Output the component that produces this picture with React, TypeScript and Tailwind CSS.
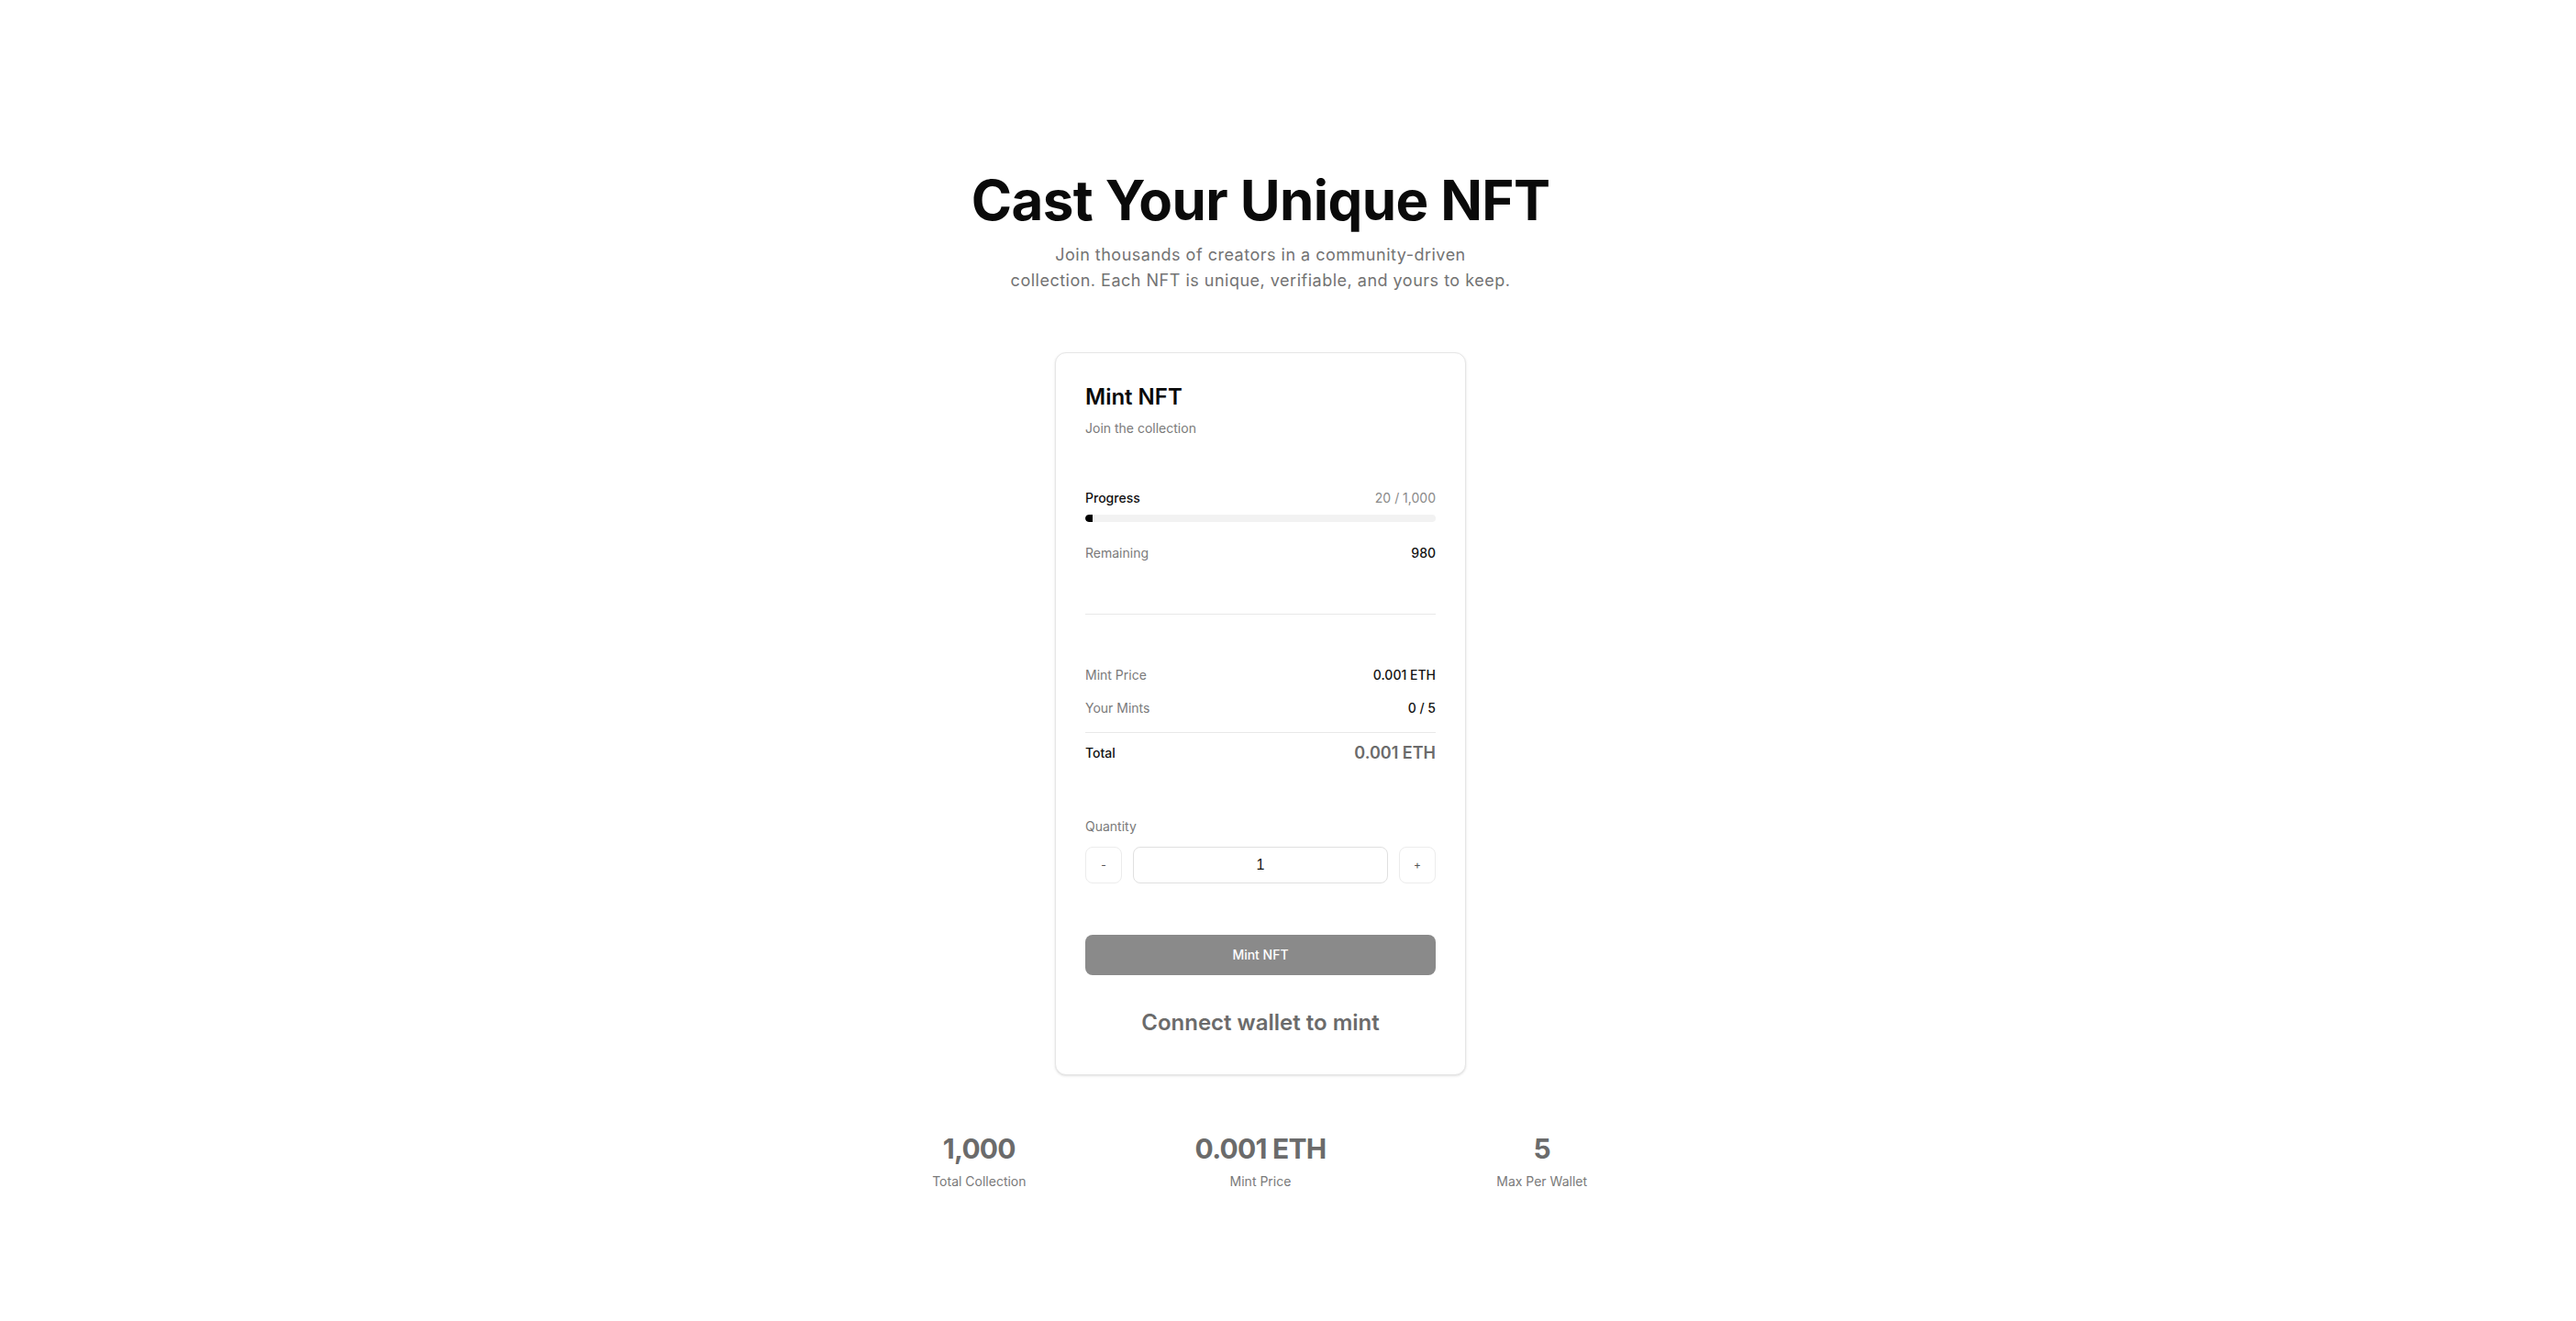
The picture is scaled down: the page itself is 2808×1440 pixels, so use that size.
import React from "react";

function Row({ label, value }: { label: string; value: string }) {
  return (
    <div className="flex items-center justify-between text-sm leading-5">
      <span className="text-[#7a7a7a]">{label}</span>
      <span className="font-medium text-[#111111]">{value}</span>
    </div>
  );
}

function Stat({ value, label }: { value: string; label: string }) {
  return (
    <div className="flex flex-col items-center">
      <div className="text-3xl font-bold leading-9 tracking-tight text-[#6b6b6b]">{value}</div>
      <div className="mt-2 text-sm leading-5 text-[#7a7a7a]">{label}</div>
    </div>
  );
}

export default function App() {
  const minted = 20;
  const total = 1000;
  const pct = (minted / total) * 100;
  return (
    <div
      className="min-h-screen w-full bg-white pr-[60px] pt-[188px] pb-24"
      style={{ fontFamily: "Inter, 'Noto Sans', sans-serif" }}
    >
      <div className="flex flex-col items-center">
        <h1 className="text-6xl font-bold leading-[60px] tracking-[-0.01em] text-[#0a0a0a]">
          Cast Your Unique NFT
        </h1>
        <p className="mt-4 max-w-[580px] text-center text-lg leading-7 tracking-[0.5px] text-[#737373]">
          Join thousands of creators in a community-driven
          <br />
          collection. Each NFT is unique, verifiable, and yours to keep.
        </p>

        <div className="mt-16 w-[448px] rounded-xl border border-[#e6e6e6] bg-white p-8 shadow-sm">
          <h2 className="text-2xl font-semibold leading-8 text-[#0a0a0a]">Mint NFT</h2>
          <p className="mt-2 text-sm leading-5 text-[#7a7a7a]">Join the collection</p>

          <div className="mt-14">
            <div className="flex items-center justify-between text-sm leading-5">
              <span className="font-medium text-[#111111]">Progress</span>
              <span className="text-[#8a8a8a]">20 / 1,000</span>
            </div>
            <div className="mt-2 h-2 w-full overflow-hidden rounded-full bg-[#f2f2f2]">
              <div className="h-full rounded-l-full bg-black" style={{ width: `${pct}%` }} />
            </div>
            <div className="mt-6">
              <Row label="Remaining" value="980" />
            </div>
          </div>

          <div className="mt-14 border-t border-[#e8e8e8]" />

          <div className="mt-14 flex flex-col gap-4">
            <Row label="Mint Price" value="0.001 ETH" />
            <Row label="Your Mints" value="0 / 5" />
          </div>
          <div className="mt-4 flex items-center justify-between border-t border-[#e8e8e8] pt-2">
            <span className="text-sm font-medium text-[#111111]">Total</span>
            <span className="text-lg font-semibold leading-7 text-[#6b6b6b]">0.001 ETH</span>
          </div>

          <div className="mt-14">
            <div className="text-sm leading-5 text-[#7a7a7a]">Quantity</div>
            <div className="mt-3 flex items-center gap-3">
              <button className="flex h-10 w-10 items-center justify-center rounded-lg border border-[#ececec] bg-white text-xs text-[#555555]">
                -
              </button>
              <div
                className="flex h-10 flex-1 items-center justify-center rounded-lg border border-[#e0e0e0] bg-white text-base text-[#111111]"
                style={{ fontFamily: "'Liberation Sans', Arial, sans-serif" }}
              >
                1
              </div>
              <button className="flex h-10 w-10 items-center justify-center rounded-lg border border-[#ececec] bg-white text-xs text-[#555555]">
                +
              </button>
            </div>
          </div>

          <button className="mt-14 flex h-11 w-full items-center justify-center rounded-lg bg-[#8a8a8a] text-sm font-medium text-white">
            Mint NFT
          </button>

          <div className="mt-7 py-2 text-center text-2xl font-semibold leading-8 text-[#6b6b6b]">
            Connect wallet to mint
          </div>
        </div>

        <div className="mt-[62px] grid w-full max-w-4xl grid-cols-3 gap-6">
          <Stat value="1,000" label="Total Collection" />
          <Stat value="0.001 ETH" label="Mint Price" />
          <Stat value="5" label="Max Per Wallet" />
        </div>
      </div>
    </div>
  );
}
